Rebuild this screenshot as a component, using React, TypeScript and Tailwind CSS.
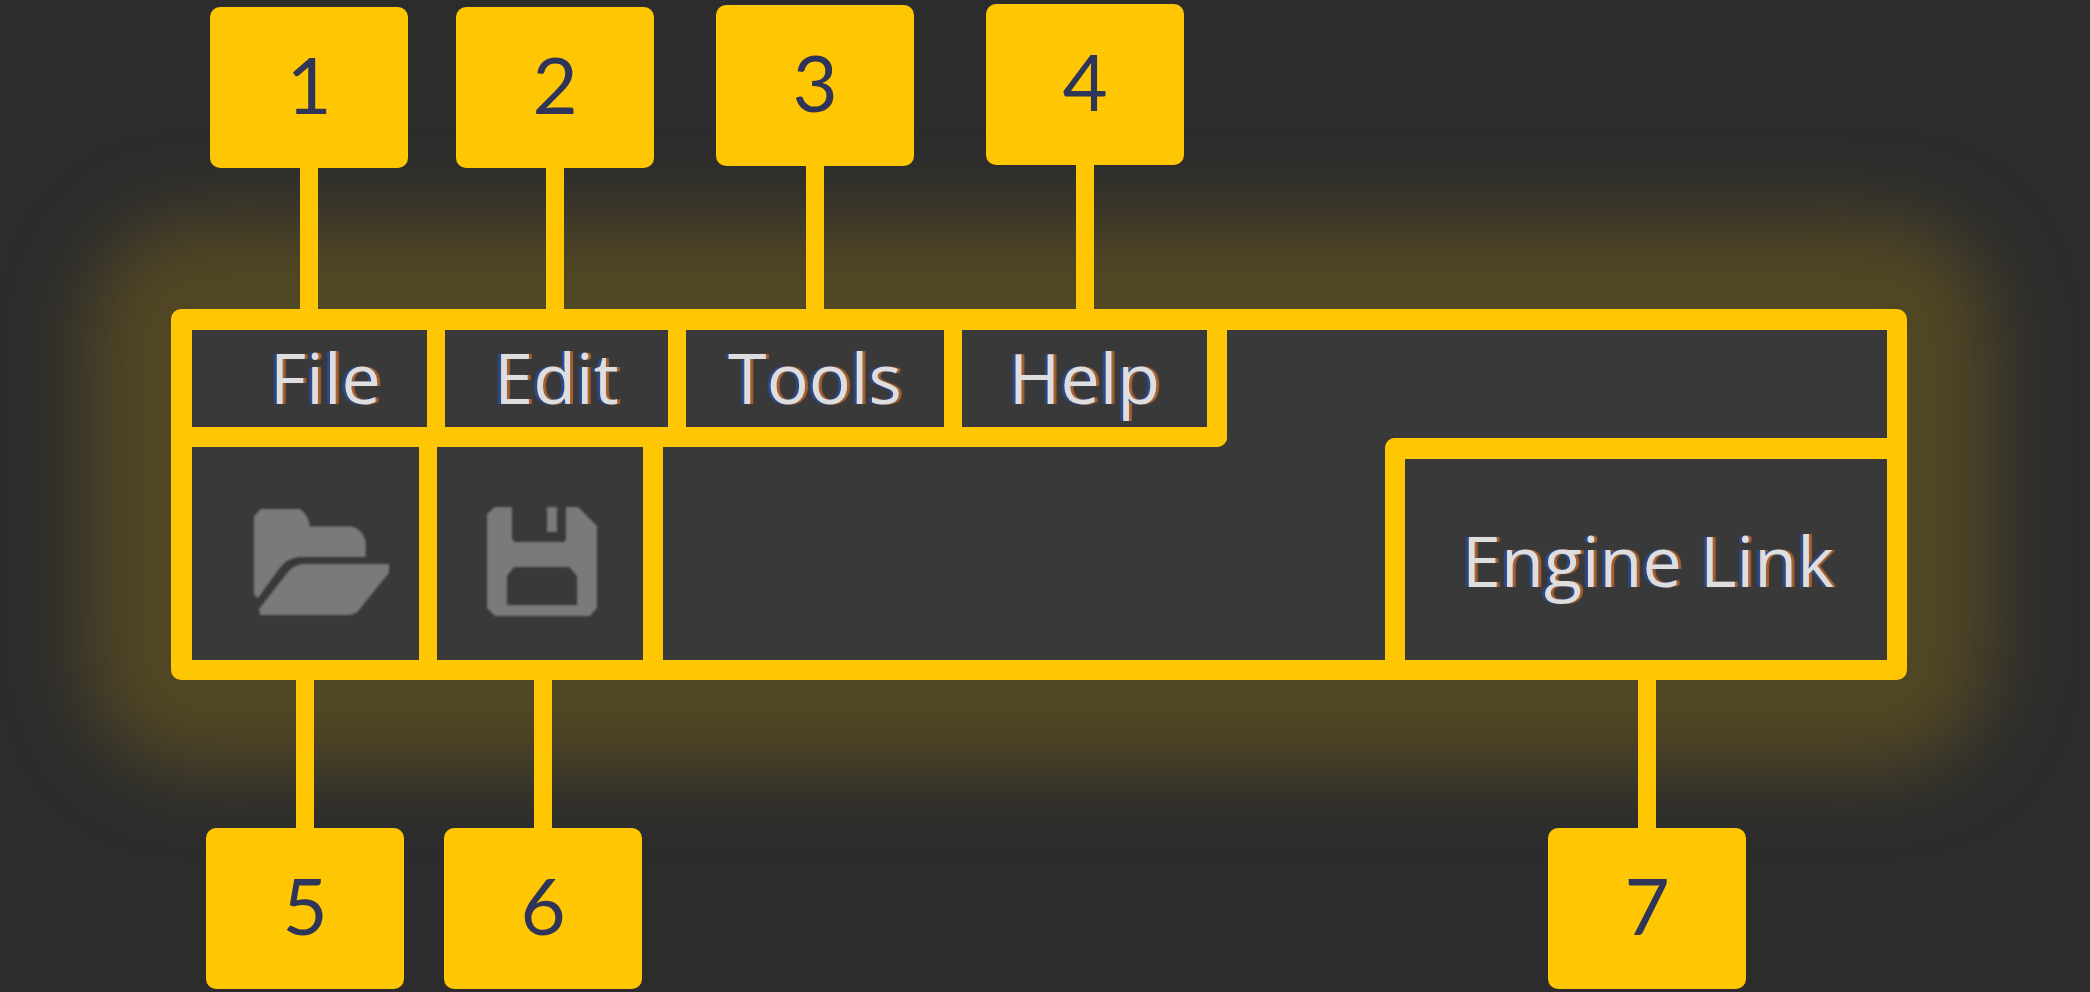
import type { ReactNode } from "react";

function NumberBox({ value }: { value: number }) {
  return (
    <span className="flex h-[161px] w-[198px] items-center justify-center rounded-[10px] bg-[#ffc703] pb-2 font-[Lato,sans-serif] text-[78px] leading-none text-[#2f3459]">
      {value}
    </span>
  );
}

function TopCallout({ value, stem }: { value: number; stem: string }) {
  return (
    <li className="flex flex-col items-center">
      <NumberBox value={value} />
      <span className={`w-[18px] bg-[#ffc703] ${stem}`} />
    </li>
  );
}

function BottomCallout({ value, className = "" }: { value: number; className?: string }) {
  return (
    <li className={`flex flex-col items-center ${className}`}>
      <span className="h-[148px] w-[18px] bg-[#ffc703]" />
      <NumberBox value={value} />
    </li>
  );
}

function Cell({ className, label, children }: { className: string; label?: string; children: ReactNode }) {
  return (
    <button
      type="button"
      aria-label={label}
      className={`flex shrink-0 items-center justify-center border-[#ffc703] whitespace-nowrap [text-shadow:-3px_0_1px_#2b4a8c,3px_0_1px_#a8602f] ${className}`}
    >
      {children}
    </button>
  );
}

function FolderIcon() {
  return (
    <svg width="137" height="108" viewBox="0 0 137 108" fill="#7a7a7a" className="blur-[1px]" aria-hidden="true">
      <path d="M1 8 8 1H47Q56 8 57 18.5H99Q112 23 112.700 36V49H46Q34 50 26 61L5 90 1 87Z" />
      <path d="M6 101 31 69Q39 57 49 56H136V65L109 98Q104 107 96 107H7Z" />
    </svg>
  );
}

function SaveIcon() {
  return (
    <svg width="112" height="112" viewBox="0 0 112 112" fill="#7a7a7a" className="blur-[1px]" aria-hidden="true">
      <path
        fillRule="evenodd"
        d="M1 8 9 1H26V32Q27 36 31 36H76Q80 36 80 32V1H92L111 20V102L104 110H9L1 102ZM21 99V70L28 61H83L91 70V99Z"
      />
      <rect x="61" y="1" width="10" height="25" />
    </svg>
  );
}

export default function App() {
  return (
    <main className="flex min-h-screen flex-col overflow-x-hidden bg-[#2c2c2c]">
      <ol className="relative z-10 flex items-end pt-1 pl-[210px]">
        <TopCallout value={1} stem="h-[141px]" />
        <li aria-hidden="true" className="w-12" />
        <TopCallout value={2} stem="h-[141px]" />
        <li aria-hidden="true" className="w-[62px]" />
        <TopCallout value={3} stem="h-[143px]" />
        <li aria-hidden="true" className="w-[72px]" />
        <TopCallout value={4} stem="h-[144px]" />
      </ol>

      <div className="relative isolate mr-[183px] ml-[171px]">
        <div className="absolute -inset-x-[84px] -inset-y-[90px] -z-10 rounded-[110px] bg-[#524724] blur-[38px]" />
        <section className="flex justify-between rounded-[10px] border-t-[21px] border-r-20 border-b-20 border-l-[21px] border-[#ffc703] bg-[#393939] font-['Open_Sans',sans-serif] text-[70px] leading-none font-medium text-[#dedede]">
          <div className="flex flex-col">
            <nav className="flex h-[117px] rounded-br-[10px] border-r-20 border-b-20 border-[#ffc703]">
              <Cell className="w-[253px] border-r-18 pb-1 pl-8">File</Cell>
              <Cell className="w-[241px] border-r-18 pb-1">Edit</Cell>
              <Cell className="w-[276px] border-r-18 pb-1">Tools</Cell>
              <Cell className="w-[245px] pb-1">Help</Cell>
            </nav>
            <div className="flex h-[213px]">
              <Cell label="Open" className="w-[245px] border-r-18 pt-4 pl-8">
                <FolderIcon />
              </Cell>
              <Cell label="Save" className="w-[226px] border-r-20 pt-4 pl-1">
                <SaveIcon />
              </Cell>
            </div>
          </div>
          <Cell className="h-[222px] w-[502px] self-end rounded-tl-[10px] border-t-[21px] border-l-20 pl-1">
            Engine Link
          </Cell>
        </section>
      </div>

      <ol className="relative z-10 flex gap-10 pr-[344px] pl-[206px]">
        <BottomCallout value={5} />
        <BottomCallout value={6} />
        <BottomCallout value={7} className="ml-auto" />
      </ol>
    </main>
  );
}
